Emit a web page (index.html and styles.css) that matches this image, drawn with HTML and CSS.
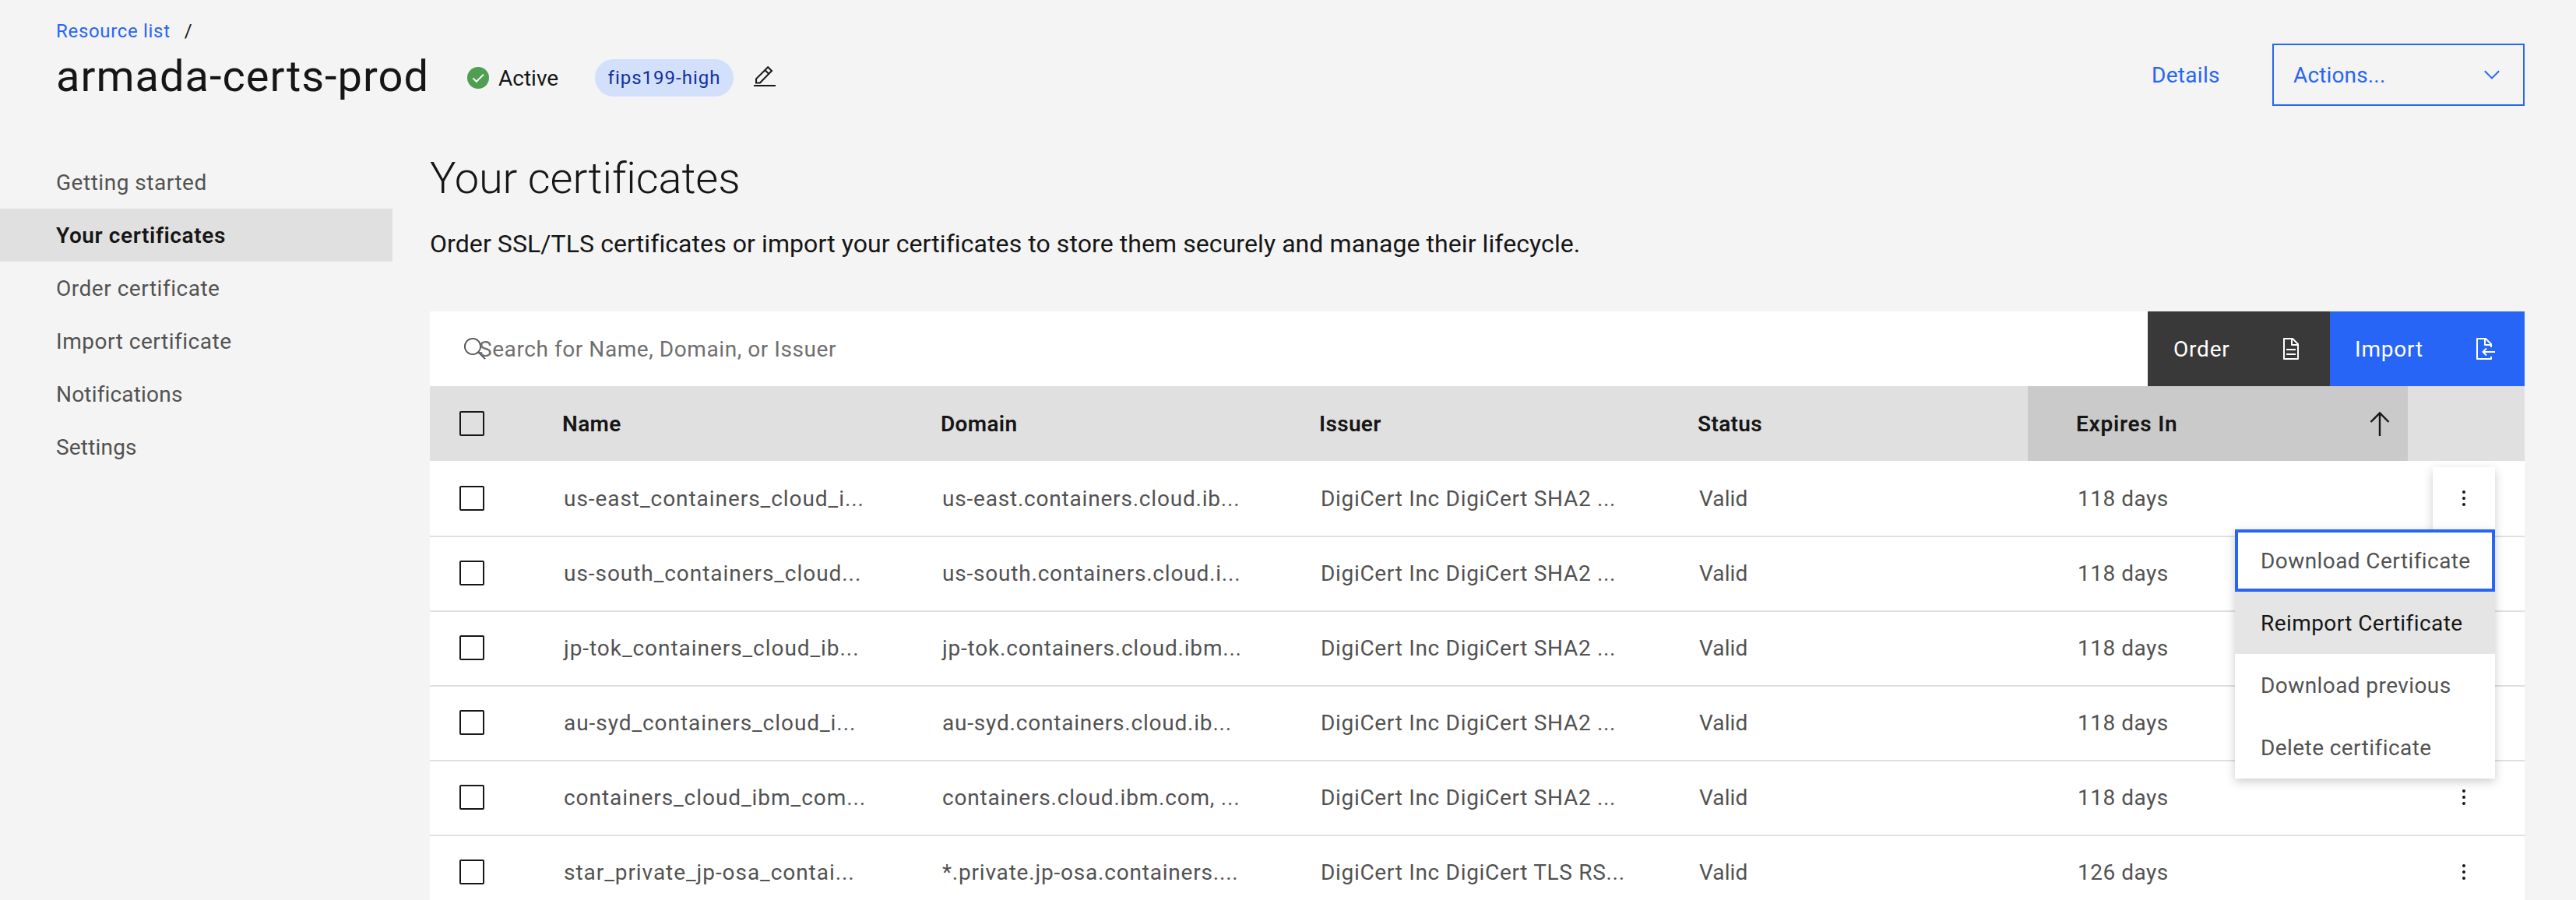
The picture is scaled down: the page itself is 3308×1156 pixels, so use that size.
FILE: index.html
```
<!DOCTYPE html>
<html lang="en">
<head>
<meta charset="utf-8">
<title>armada-certs-prod</title>
<link rel="stylesheet" href="styles.css">
</head>
<body>
<header class="page-header">
  <nav class="breadcrumb"><a class="crumb" href="#">Resource list</a><span>/</span></nav>
  <div class="title-row">
    <h1 class="instance-name">armada-certs-prod</h1>
    <svg class="status-icon" viewBox="0 0 28 28"><circle cx="14" cy="14" r="14" fill="#4f9e52"/><path d="M7.4 14.4l4.4 4.4 9.2-9.2" fill="none" stroke="#fff" stroke-width="2"/></svg>
    <span class="status-text">Active</span>
    <span class="tag">fips199-high</span>
    <svg class="edit-icon" viewBox="0 0 28 28"><path d="M0 25h28" stroke="#161616" stroke-width="2"/><path d="M3 21.5v-5.2L18.2 1.2l4.8 4.8L7.9 21.5zM14.4 5l4.8 4.8" fill="none" stroke="#161616" stroke-width="2"/></svg>
  </div>
  <div class="header-actions">
    <a class="details" href="#">Details</a>
    <button class="actions"><span>Actions...</span><svg class="chevron" viewBox="0 0 20 12"><path d="M.8 1.2L10 10.4l9.2-9.2" fill="none" stroke="#2765f6" stroke-width="2"/></svg></button>
  </div>
</header>
<div class="layout">
  <nav class="side-nav">
    <a class="nav-item" href="#">Getting started</a>
    <a class="nav-item current" href="#">Your certificates</a>
    <a class="nav-item" href="#">Order certificate</a>
    <a class="nav-item" href="#">Import certificate</a>
    <a class="nav-item short" href="#">Notifications</a>
    <a class="nav-item short" href="#">Settings</a>
  </nav>
  <main class="content">
    <h2 class="heading">Your certificates</h2>
    <p class="description">Order SSL/TLS certificates or import your certificates to store them securely and manage their lifecycle.</p>
    <div class="toolbar">
      <div class="search">
        <svg class="search-icon" viewBox="0 0 28 28"><circle cx="11" cy="11" r="10.1" fill="none" stroke="#525252" stroke-width="1.8"/><path d="M18.2 18.2l8.9 8.9" stroke="#525252" stroke-width="2"/></svg>
        <span class="placeholder">Search for Name, Domain, or Issuer</span>
      </div>
      <button class="tool order"><span>Order</span><svg viewBox="0 0 20 28"><path d="M1 1h11l7 7v19H1zM11 1v8h8M4 15h12M4 21h12" fill="none" stroke="#fff" stroke-width="2" stroke-linejoin="round"/></svg></button>
      <button class="tool import-button"><span>Import</span><svg viewBox="0 0 24 28"><path d="M19 12V8l-7-7H1v26h18v-3M11 1v8h8M24 18H8.5M13 13.5L8.5 18l4.5 4.5" fill="none" stroke="#fff" stroke-width="2" stroke-linejoin="round"/></svg></button>
    </div>
    <div class="table">
      <div class="row head">
        <div class="check"><i class="box"></i></div><div class="cell">Name</div><div class="cell">Domain</div><div class="cell">Issuer</div><div class="cell">Status</div>
        <div class="cell sorted">Expires In<svg class="sort" viewBox="0 0 26 32"><path d="M13 2v30M1.5 14L13 2.5 24.5 14" fill="none" stroke="#161616" stroke-width="2.4"/></svg></div><div></div>
      </div>
      <div class="row">
        <div class="check"><i class="box"></i></div><div class="cell name">us-east_containers_cloud_i...</div><div class="cell domain">us-east.containers.cloud.ib...</div><div class="cell issuer">DigiCert Inc DigiCert SHA2 ...</div><div class="cell">Valid</div><div class="cell days">118 days</div>
        <div class="more open"><svg viewBox="0 0 4 20"><circle cx="2" cy="2" r="2"/><circle cx="2" cy="10" r="2"/><circle cx="2" cy="18" r="2"/></svg>
          <div class="menu">
            <a class="option focused" href="#">Download Certificate</a>
            <a class="option hovered" href="#">Reimport Certificate</a>
            <a class="option" href="#">Download previous</a>
            <a class="option" href="#">Delete certificate</a>
          </div>
        </div>
      </div>
      <div class="row">
        <div class="check"><i class="box"></i></div><div class="cell name">us-south_containers_cloud...</div><div class="cell domain">us-south.containers.cloud.i...</div><div class="cell issuer">DigiCert Inc DigiCert SHA2 ...</div><div class="cell">Valid</div><div class="cell days">118 days</div>
        <div class="more"></div>
      </div>
      <div class="row">
        <div class="check"><i class="box"></i></div><div class="cell name">jp-tok_containers_cloud_ib...</div><div class="cell domain">jp-tok.containers.cloud.ibm...</div><div class="cell issuer">DigiCert Inc DigiCert SHA2 ...</div><div class="cell">Valid</div><div class="cell days">118 days</div>
        <div class="more"></div>
      </div>
      <div class="row">
        <div class="check"><i class="box"></i></div><div class="cell name">au-syd_containers_cloud_i...</div><div class="cell domain">au-syd.containers.cloud.ib...</div><div class="cell issuer">DigiCert Inc DigiCert SHA2 ...</div><div class="cell">Valid</div><div class="cell days">118 days</div>
        <div class="more"></div>
      </div>
      <div class="row">
        <div class="check"><i class="box"></i></div><div class="cell name">containers_cloud_ibm_com...</div><div class="cell domain">containers.cloud.ibm.com, ...</div><div class="cell issuer">DigiCert Inc DigiCert SHA2 ...</div><div class="cell">Valid</div><div class="cell days">118 days</div>
        <div class="more"><svg viewBox="0 0 4 20"><circle cx="2" cy="2" r="2"/><circle cx="2" cy="10" r="2"/><circle cx="2" cy="18" r="2"/></svg></div>
      </div>
      <div class="row">
        <div class="check"><i class="box"></i></div><div class="cell name">star_private_jp-osa_contai...</div><div class="cell domain">*.private.jp-osa.containers....</div><div class="cell issuer">DigiCert Inc DigiCert TLS RS...</div><div class="cell">Valid</div><div class="cell days">126 days</div>
        <div class="more"><svg viewBox="0 0 4 20"><circle cx="2" cy="2" r="2"/><circle cx="2" cy="10" r="2"/><circle cx="2" cy="18" r="2"/></svg></div>
      </div>
    </div>
  </main>
</div>
</body>
</html>
```
FILE: styles.css
```
* { box-sizing: border-box; }
body {
  margin: 0;
  background: #f4f4f4;
  color: #161616;
  font: 400 28px/36px Roboto, "Liberation Sans", sans-serif;
}
a { color: inherit; text-decoration: none; }
h1, h2, p { margin: 0; }
svg { display: block; flex: none; }
button { border: 0; background: none; font: inherit; text-align: left; }

.page-header {
  display: grid;
  grid-template-columns: 1fr auto;
  grid-template-rows: 40px 80px;
  height: 200px;
  padding: 20px 66px 0 72px;
}
.breadcrumb { display: flex; gap: 18px; font-size: 24px; line-height: 40px; }
.crumb { color: #2765f6; letter-spacing: .68px; }
.title-row { display: flex; align-items: center; grid-row: 2; }
.instance-name { width: 528px; font-size: 56px; font-weight: 400; line-height: 72px; letter-spacing: 1px; margin-top: -5px; }
.status-icon { width: 28px; height: 28px; }
.status-text { width: 124px; margin-left: 12px; padding-top: 1px; }
.tag {
  width: 178px;
  height: 48px;
  border-radius: 24px;
  background: #d3e0fb;
  color: #12309b;
  font-size: 24px;
  line-height: 48px;
  letter-spacing: 1px;
  text-align: center;
}
.edit-icon { width: 28px; height: 28px; margin-left: 26px; margin-top: -2px; }
.header-actions { display: flex; align-items: center; grid-row: 1 / 3; grid-column: 2; height: 80px; margin-top: 36px; color: #2765f6; }
.details { width: 155px; padding-top: 2px; letter-spacing: .3px; }
.actions {
  display: flex;
  align-items: center;
  justify-content: space-between;
  width: 324px;
  height: 80px;
  padding: 0 30px 0 25px;
  border: 2px solid #2765f6;
  color: #2765f6;
}
.actions span { padding-top: 2px; letter-spacing: .15px; }
.chevron { width: 20px; height: 12px; }

.layout { display: flex; gap: 48px; }
.side-nav { width: 504px; flex: none; }
.nav-item { display: block; height: 68px; padding-left: 72px; line-height: 70px; color: #525252; letter-spacing: .52px; }
.nav-item.current { background: #e0e0e0; color: #161616; font-weight: 600; letter-spacing: .6px; }
.nav-item.short { letter-spacing: .18px; }
.content { width: 2690px; }
.heading { height: 78px; font-size: 56px; font-weight: 300; line-height: 58px; letter-spacing: -.12px; }
.description { height: 122px; font-size: 32px; line-height: 70px; letter-spacing: .08px; }

.toolbar { display: flex; height: 96px; background: #fff; }
.search { display: flex; align-items: center; flex: 1; padding-left: 44px; }
.search-icon { width: 28px; height: 28px; }
.placeholder { margin-left: -9px; padding-top: 2px; color: #6f6f6f; letter-spacing: .57px; }
.tool { display: flex; align-items: center; justify-content: space-between; color: #fff; letter-spacing: .8px; }
.tool span { padding-top: 2px; }
.tool svg { height: 28px; }
.order { width: 234px; padding: 0 40px 0 33px; background: #393939; }
.order svg { width: 20px; }
.import-button { width: 250px; padding: 0 38px 0 32px; background: #2765f6; }
.import-button svg { width: 24px; }

.table { background: #fff; }
.row { display: grid; grid-template-columns: 108px repeat(4, 486px) 488px 150px; height: 96px; align-items: center; }
.row + .row + .row { box-shadow: inset 0 2px #e0e0e0; }
.head { background: #e0e0e0; font-weight: 600; }
.box { display: block; width: 32px; height: 32px; margin-left: 38px; border: 2px solid #161616; border-radius: 2px; }
.cell { padding: 2px 0 0 64px; color: #525252; letter-spacing: .1px; }
.head .cell { padding-left: 62px; color: #161616; letter-spacing: .35px; }
.name { letter-spacing: .95px; }
.domain { letter-spacing: .8px; }
.issuer { letter-spacing: .68px; }
.days { letter-spacing: .5px; }
.head .sorted {
  display: flex;
  align-items: center;
  justify-content: space-between;
  align-self: stretch;
  padding-right: 23px;
  background: #cacaca;
  letter-spacing: .75px;
}
.sort { width: 26px; height: 32px; margin-top: -2px; }
.more { position: relative; display: flex; align-items: center; justify-content: center; width: 80px; height: 80px; margin-left: 32px; }
.more svg { width: 4px; height: 20px; fill: #161616; }
.open { background: #fff; box-shadow: 0 4px 12px rgba(0, 0, 0, .2); z-index: 1; }
.menu { position: absolute; top: 80px; right: 0; width: 334px; background: #fff; box-shadow: 0 4px 12px rgba(0, 0, 0, .2); }
.option { display: block; height: 80px; padding-left: 33px; line-height: 82px; color: #525252; letter-spacing: .42px; }
.focused { padding-left: 29px; border: 4px solid #2765f6; line-height: 74px; }
.hovered { background: #e5e5e5; color: #161616; }
```
